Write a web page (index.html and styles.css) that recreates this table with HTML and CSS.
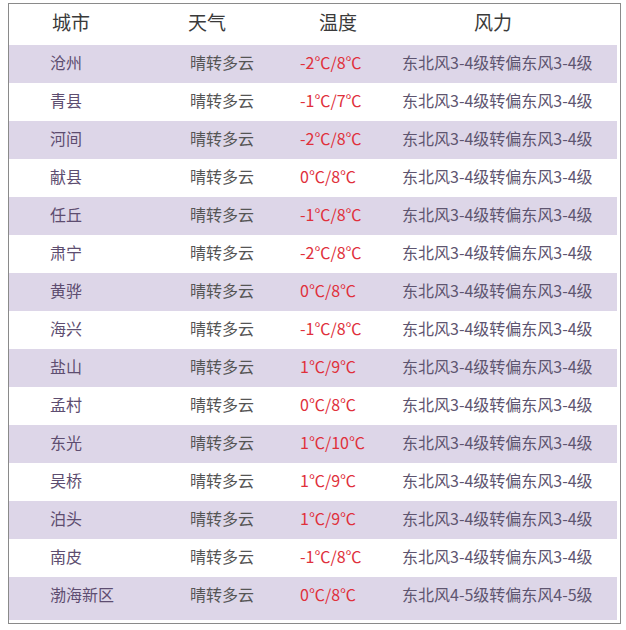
FILE: index.html
```html
<!DOCTYPE html>
<html lang="zh">
<head>
<meta charset="utf-8">
<link rel="stylesheet" href="styles.css">
</head>
<body>
<div class="frame">
  <div class="row head">
    <span class="h1">城市</span><span class="h2">天气</span><span class="h3">温度</span><span class="h4">风力</span>
  </div>
  <div class="row alt"><span class="city">沧州</span><span class="wx">晴转多云</span><span class="temp">-2℃/8℃</span><span class="wind">东北风3-4级转偏东风3-4级</span></div>
  <div class="row"><span class="city">青县</span><span class="wx">晴转多云</span><span class="temp">-1℃/7℃</span><span class="wind">东北风3-4级转偏东风3-4级</span></div>
  <div class="row alt"><span class="city">河间</span><span class="wx">晴转多云</span><span class="temp">-2℃/8℃</span><span class="wind">东北风3-4级转偏东风3-4级</span></div>
  <div class="row"><span class="city">献县</span><span class="wx">晴转多云</span><span class="temp">0℃/8℃</span><span class="wind">东北风3-4级转偏东风3-4级</span></div>
  <div class="row alt"><span class="city">任丘</span><span class="wx">晴转多云</span><span class="temp">-1℃/8℃</span><span class="wind">东北风3-4级转偏东风3-4级</span></div>
  <div class="row"><span class="city">肃宁</span><span class="wx">晴转多云</span><span class="temp">-2℃/8℃</span><span class="wind">东北风3-4级转偏东风3-4级</span></div>
  <div class="row alt"><span class="city">黄骅</span><span class="wx">晴转多云</span><span class="temp">0℃/8℃</span><span class="wind">东北风3-4级转偏东风3-4级</span></div>
  <div class="row"><span class="city">海兴</span><span class="wx">晴转多云</span><span class="temp">-1℃/8℃</span><span class="wind">东北风3-4级转偏东风3-4级</span></div>
  <div class="row alt"><span class="city">盐山</span><span class="wx">晴转多云</span><span class="temp">1℃/9℃</span><span class="wind">东北风3-4级转偏东风3-4级</span></div>
  <div class="row"><span class="city">孟村</span><span class="wx">晴转多云</span><span class="temp">0℃/8℃</span><span class="wind">东北风3-4级转偏东风3-4级</span></div>
  <div class="row alt"><span class="city">东光</span><span class="wx">晴转多云</span><span class="temp">1℃/10℃</span><span class="wind">东北风3-4级转偏东风3-4级</span></div>
  <div class="row"><span class="city">吴桥</span><span class="wx">晴转多云</span><span class="temp">1℃/9℃</span><span class="wind">东北风3-4级转偏东风3-4级</span></div>
  <div class="row alt"><span class="city">泊头</span><span class="wx">晴转多云</span><span class="temp">1℃/9℃</span><span class="wind">东北风3-4级转偏东风3-4级</span></div>
  <div class="row"><span class="city">南皮</span><span class="wx">晴转多云</span><span class="temp">-1℃/8℃</span><span class="wind">东北风3-4级转偏东风3-4级</span></div>
  <div class="row alt last"><span class="city">渤海新区</span><span class="wx">晴转多云</span><span class="temp">0℃/8℃</span><span class="wind">东北风4-5级转偏东风4-5级</span></div>
</div>
</body>
</html>
```
FILE: styles.css
```css
html, body {
  margin: 0;
  padding: 0;
  background: #ffffff;
}
body {
  font-family: "Noto Sans CJK SC", "Noto Sans", sans-serif;
  width: 626px;
  height: 630px;
  overflow: hidden;
}
.frame {
  margin: 3px 0 0 8px;
  border: 1px solid #8a8a8a;
  padding: 0 3px 3px 0;
  box-sizing: border-box;
  width: 613px;
  height: 621px;
  display: flex;
  flex-direction: column;
  background: #fff;
}
.row {
  display: grid;
  grid-template-columns: 140px 110px 102px 1fr;
  align-items: center;
  height: 38px;
  padding-left: 41px;
  padding-bottom: 4px;
  box-sizing: border-box;
  font-size: 16px;
  line-height: 20px;
  white-space: nowrap;
}
.row.alt {
  background: #ddd6e8;
}
.row.last {
  height: 43px;
  padding-bottom: 9px;
}
.row.head {
  height: 41px;
  font-size: 19px;
  color: #3a3a3a;
  padding-bottom: 6px;
}
.h1 { margin-left: 2px; }
.h2 { margin-left: -2px; }
.h3 { margin-left: 19px; }
.h4 { margin-left: 72px; }
.city { color: #5d4d70; }
.wx { color: #555555; }
.temp { color: #e0303b; }
.wind { color: #5e5570; }
```
